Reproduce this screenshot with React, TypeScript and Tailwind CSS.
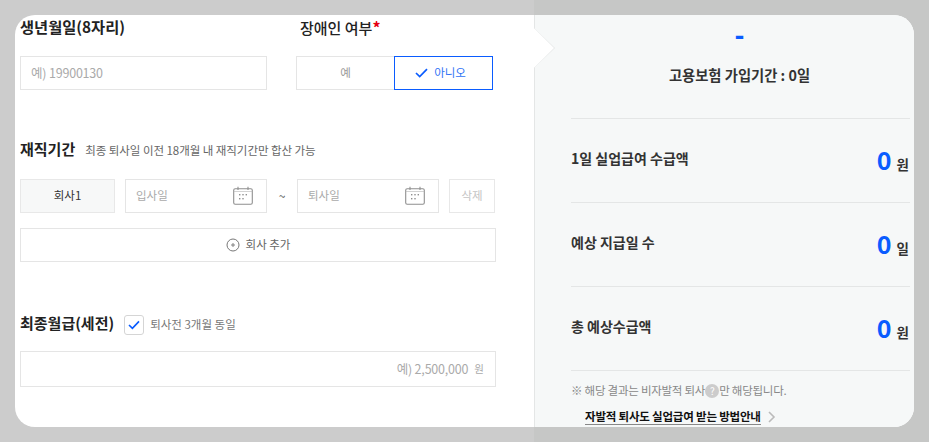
import React from "react";

function Calendar() {
  return (
    <svg width="20" height="20" viewBox="0 0 20 20" fill="none" className="shrink-0">
      <rect x="0.7" y="2.7" width="18.6" height="15.6" rx="1.5" stroke="#8f8f8f" strokeWidth="1.1" />
      <path d="M0.7 5.5H19.3" stroke="#b5b5b5" strokeWidth="0.6" />
      <path d="M5 0.8V4M15 0.8V4" stroke="#8f8f8f" strokeWidth="1.1" />
      <g fill="#8f8f8f">
        <rect x="6" y="8" width="1.4" height="1.4" />
        <rect x="9.3" y="8" width="1.4" height="1.4" />
        <rect x="12.6" y="8" width="1.4" height="1.4" />
        <rect x="6" y="12" width="1.4" height="1.4" />
        <rect x="9.3" y="12" width="1.4" height="1.4" />
      </g>
    </svg>
  );
}

function DateField({ label }: { label: string }) {
  return (
    <div className="flex h-[34px] w-[142px] items-center justify-between border border-[#e5e5e5] pl-[10px] pr-[13px]">
      <span className="-mt-[1px] text-[11.5px] text-[#aaaaaa]">{label}</span>
      <Calendar />
    </div>
  );
}

function ResultRow({ label, unit }: { label: string; unit: string }) {
  return (
    <div className="flex h-[84px] items-center justify-between border-b border-[#e4e6e6] pr-[1px]">
      <span className="-mt-[5px] text-[14px] font-semibold text-[#333333]">{label}</span>
      <span className="-mt-[2px] flex items-baseline gap-[5px]">
        <span className="text-[25px] font-bold leading-[28px] text-[#0a5cff]">0</span>
        <span className="text-[13.5px] font-semibold text-[#333333]">{unit}</span>
      </span>
    </div>
  );
}

export default function App() {
  return (
    <div
      className="h-[442px] w-[929px] overflow-hidden bg-[linear-gradient(90deg,#cccccc_534px,#c6c7c6_534px)] pl-[15px] pt-[15px]"
      style={{ fontFamily: '"Noto Sans CJK KR", "Noto Sans", sans-serif' }}
    >
      <div className="flex h-[412px] w-[899px] overflow-hidden rounded-[20px] bg-white">
        {/* left form */}
        <div className="w-[519px] shrink-0 pl-[5px]">
          <div className="flex">
            <div className="w-[247px]">
              <div className="flex h-[23px] items-center text-[15.3px] font-semibold leading-none text-[#222222]">생년월일(8자리)</div>
              <div className="mt-[18px] flex h-[34px] items-center border border-[#e5e5e5] pl-[10px] text-[12.5px] tracking-[-0.2px] text-[#aaaaaa]">예) 19900130</div>
            </div>
            <div className="ml-[29px]">
              <div className="flex h-[24px] items-center pl-[4px] text-[15px] font-medium leading-none text-[#222222]">
                장애인 여부<span className="text-[16px] font-bold text-[#e60012]">*</span>
              </div>
              <div className="mt-[17px] flex h-[34px]">
                <div className="flex w-[98px] items-center justify-center border border-r-0 border-[#e5e5e5] text-[11.5px] text-[#999999]">예</div>
                <div className="flex w-[99px] items-center justify-center gap-[6px] border border-[#0a5cff] pr-[6px] text-[11.5px] text-[#2f72f5]">
                  <svg width="13" height="10" viewBox="0 0 13 10" fill="none">
                    <path d="M1 5L4.7 8.6L12 1.2" stroke="#0a5cff" strokeWidth="1.7" />
                  </svg>
                  아니오
                </div>
              </div>
            </div>
          </div>

          <div className="mt-[49px] flex h-[20px] items-center">
            <span className="text-[15px] font-bold text-[#222222]">재직기간</span>
            <span className="ml-[10px] mt-[3px] text-[11.5px] tracking-[-0.05px] text-[#666666]">최종 퇴사일 이전 18개월 내 재직기간만 합산 가능</span>
          </div>

          <div className="mt-[20px] flex items-center">
            <div className="flex h-[34px] w-[95px] items-center justify-center border border-[#e8e8e8] bg-[#f7f8f8] text-[11.5px] text-[#333333]">회사1</div>
            <div className="ml-[10px]"><DateField label="입사일" /></div>
            <div className="w-[30px] text-center text-[12px] text-[#555555]">~</div>
            <DateField label="퇴사일" />
            <div className="ml-[10px] flex h-[34px] w-[46px] items-center justify-center border border-[#e8e8e8] text-[11.5px] text-[#c4c4c4]">삭제</div>
          </div>

          <div className="mt-[15px] flex h-[34px] w-[476px] items-center justify-center gap-[6px] border border-[#e5e5e5] text-[11.5px] text-[#666666]">
            <svg width="14" height="14" viewBox="0 0 14 14" fill="none">
              <circle cx="7" cy="7" r="6" stroke="#777777" strokeWidth="1" />
              <path d="M7 5V9M5 7H9" stroke="#777777" strokeWidth="0.9" />
            </svg>
            회사 추가
          </div>

          <div className="mt-[53px] flex h-[20px] items-center">
            <span className="-mt-[4px] text-[15px] font-semibold text-[#222222]">최종월급(세전)</span>
            <span className="ml-[10px] flex h-[20px] w-[20px] items-center justify-center rounded-[3px] border border-[#d5d5d5]">
              <svg width="12" height="10" viewBox="0 0 12 10" fill="none">
                <path d="M1 5L4.4 8.4L11 1.4" stroke="#0a5cff" strokeWidth="1.6" />
              </svg>
            </span>
            <span className="ml-[6px] text-[11.5px] text-[#777777]">퇴사전 3개월 동일</span>
          </div>

          <div className="mt-[16px] flex h-[36px] w-[476px] items-center justify-end gap-[6px] border border-[#e5e5e5] pr-[11px] text-[12.5px] text-[#aaaaaa]">
            <span className="tracking-[-0.2px]">예) 2,500,000</span>
            <span className="text-[10.5px]">원</span>
          </div>
        </div>

        {/* right result panel */}
        <div className="relative w-[380px] shrink-0 border-l border-[#e4e6e6] bg-[#f6f8f8] pl-[36px] pr-[4px]">
          <div className="absolute left-[-1px] top-[13px] h-[40px] w-[21px] bg-[#e4e6e6] [clip-path:polygon(0_0,100%_50%,0_100%)]">
            <div className="h-full w-[20px] bg-white [clip-path:polygon(0_0,100%_50%,0_100%)]" />
          </div>
          <div className="flex h-[104px] flex-col items-center border-b border-[#e4e6e6] pr-[2px]">
            <div className="text-[26px] font-black leading-[38px] text-[#0a5cff]">-</div>
            <div className="mt-[11px] text-[14.3px] font-semibold leading-[22px] text-[#333333]">고용보험 가입기간 : 0일</div>
          </div>
          <ResultRow label="1일 실업급여 수급액" unit="원" />
          <ResultRow label="예상 지급일 수" unit="일" />
          <ResultRow label="총 예상수급액" unit="원" />
          <div className="mt-[10px] text-[11.5px] leading-[18px] tracking-[-0.25px] text-[#888888]">
            ※ 해당 결과는 비자발적 퇴사
            <span className="inline-block h-[14px] w-[14px] rounded-full bg-[#cccccc] text-center text-[10px] leading-[14px] text-white">?</span>
            만 해당됩니다.
          </div>
          <div className="mt-[9px] flex items-center pl-[14px]">
            <span className="border-b border-[#888888] text-[11.5px] font-semibold leading-[16px] tracking-[-0.2px] text-[#111111]">자발적 퇴사도 실업급여 받는 방법안내</span>
            <svg width="8" height="12" viewBox="0 0 8 12" fill="none" className="ml-[7px]">
              <path d="M1 1L6 6L1 11" stroke="#bbbbbb" strokeWidth="1.6" />
            </svg>
          </div>
        </div>
      </div>
    </div>
  );
}
